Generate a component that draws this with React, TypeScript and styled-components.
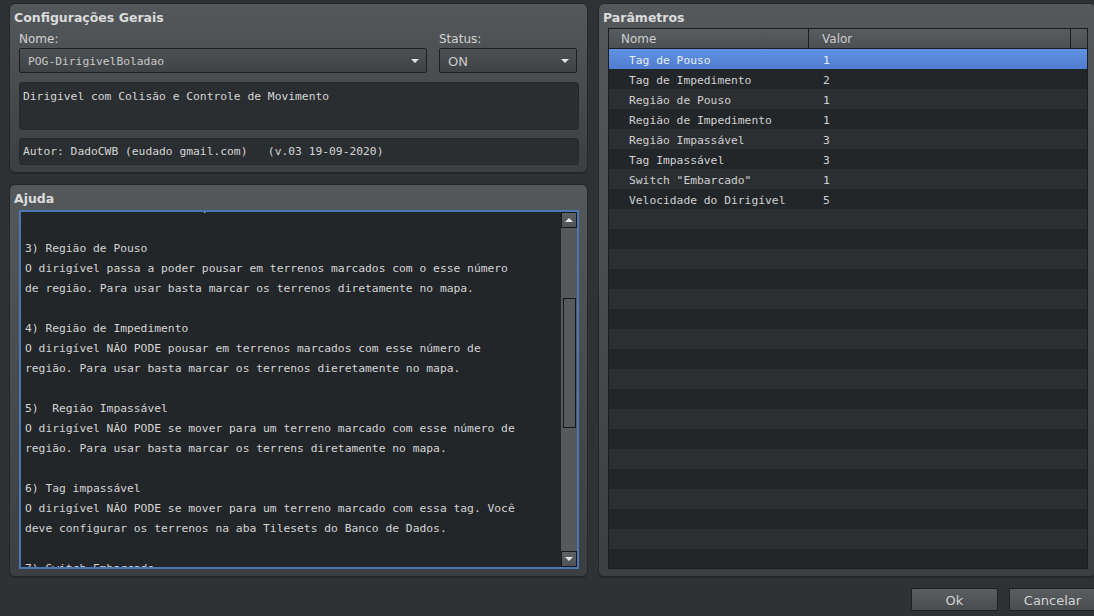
import { useLayoutEffect, useRef } from "react";
import styled, { createGlobalStyle } from "styled-components";

const GlobalStyle = createGlobalStyle`
  html, body {
    margin: 0;
    padding: 0;
    background: #2f3235;
    overflow: hidden;
  }
  * {
    box-sizing: border-box;
  }
`;

const SANS = `"DejaVu Sans", "Liberation Sans", sans-serif`;
const MONO = `"DejaVu Sans Mono", "Liberation Mono", monospace`;

const Window = styled.div`
  width: 1105px;
  height: 616px;
  padding: 3px 9px 0 9px;
  display: flex;
  flex-direction: column;
  background: #2f3235;
  font-family: ${SANS};
  color: #d0d0d0;
`;

const Main = styled.div`
  display: grid;
  grid-template-columns: 579px 498px;
  column-gap: 10px;
  height: 574px;
`;

const LeftColumn = styled.div`
  display: grid;
  grid-template-rows: 170px 1fr;
  row-gap: 11px;
  min-height: 0;
`;

const GroupBox = styled.section`
  display: flex;
  flex-direction: column;
  min-height: 0;
  border: 1px solid #24272a;
  border-radius: 6px;
  background: linear-gradient(#55585b, #3c3f42);
  padding: 3px 8px 7px 9px;
  box-shadow: 0 1px 0 rgba(0, 0, 0, 0.25);
`;

const GroupTitle = styled.h2`
  margin: 0 0 0 -5px;
  height: 18px;
  line-height: 21px;
  font-size: 12.5px;
  font-weight: bold;
  color: #dcdcdc;
`;

const FieldGrid = styled.div`
  display: grid;
  grid-template-columns: 408px 138px;
  column-gap: 12px;
  margin-top: 5px;
`;

const Field = styled.div`
  display: flex;
  flex-direction: column;
`;

const Label = styled.label`
  height: 16px;
  line-height: 18px;
  font-size: 12px;
  color: #d2d2d2;
`;

const Combo = styled.div<{ $mono?: boolean }>`
  margin-top: 2px;
  height: 25px;
  display: flex;
  align-items: center;
  justify-content: space-between;
  padding: 1px 7px 0 8px;
  border: 1px solid #1d1f21;
  border-radius: 2px;
  background: linear-gradient(#4d5053, #404346);
  font-family: ${(p) => (p.$mono ? MONO : SANS)};
  font-size: ${(p) => (p.$mono ? "11.3px" : "13px")};
  color: #c8c8c8;
`;

const Arrow = styled.span<{ $up?: boolean }>`
  width: 0;
  height: 0;
  border-left: 4px solid transparent;
  border-right: 4px solid transparent;
  ${(p) =>
    p.$up
      ? "border-bottom: 4px solid #e6e6e6;"
      : "border-top: 4px solid #e6e6e6;"}
`;

const TextBox = styled.div<{ $height: number; $gap: number; $center?: boolean }>`
  margin-top: ${(p) => p.$gap}px;
  height: ${(p) => p.$height}px;
  padding: ${(p) => (p.$center ? "1px 3px 0" : "4px 3px")};
  display: flex;
  align-items: ${(p) => (p.$center ? "center" : "flex-start")};
  border: 1px solid #26292b;
  border-radius: 3px;
  background: #2b2e31;
  font-family: ${MONO};
  font-size: 11.3px;
  line-height: 20px;
  color: #d4d4d4;
  white-space: pre;
`;

const HelpArea = styled.div`
  flex: 1;
  min-height: 0;
  margin-top: 4px;
  display: flex;
  border: 2px solid #4a77b3;
  background: #232629;
  overflow: hidden;
`;

const HelpText = styled.div`
  flex: 1;
  min-width: 0;
  overflow: hidden;
  padding-left: 4px;
`;

const HelpLines = styled.pre`
  margin: 0;
  font-family: ${MONO};
  font-size: 11.3px;
  line-height: 20px;
  color: #d4d4d4;
`;

const ScrollBar = styled.div`
  width: 16px;
  flex-shrink: 0;
  display: flex;
  flex-direction: column;
  background: #56595c;
`;

const ScrollButton = styled.div`
  height: 16px;
  display: flex;
  align-items: center;
  justify-content: center;
  border: 1px solid #17191b;
  background: linear-gradient(#5e6164, #505356);
`;

const ScrollTrack = styled.div`
  flex: 1;
  padding: 70px 1px 0 2px;
`;

const ScrollThumb = styled.div`
  height: 130px;
  border: 1px solid #15171a;
  background: #575a5d;
`;

const Table = styled.div`
  flex: 1;
  min-height: 0;
  margin: 3px -1px 0 0;
  display: flex;
  flex-direction: column;
  border: 1px solid #1b1d1f;
  overflow: hidden;
`;

const HeaderRow = styled.div`
  display: grid;
  grid-template-columns: 200px 262px 1fr;
  height: 20px;
  flex-shrink: 0;
  border-bottom: 1px solid #1b1d1f;
  background: linear-gradient(#595c5f, #4d5053);
`;

const HeaderCell = styled.div<{ $pad: number }>`
  padding: 1px 0 0 ${(p) => p.$pad}px;
  line-height: 19px;
  font-size: 12px;
  color: #cdcdcd;
  border-right: 1px solid #1b1d1f;
  &:last-child {
    border-right: none;
  }
`;

const Row = styled.div<{ $selected?: boolean; $odd?: boolean }>`
  display: grid;
  grid-template-columns: 200px 1fr;
  height: 20px;
  flex-shrink: 0;
  font-family: ${MONO};
  font-size: 11.3px;
  line-height: 20px;
  color: ${(p) => (p.$selected ? "#e6edf8" : "#d0d0d0")};
  background: ${(p) =>
    p.$selected
      ? "linear-gradient(#6192e4, #4f7dcf)"
      : p.$odd
      ? "#232629"
      : "#2c2f32"};
`;

const Cell = styled.div<{ $pad: number }>`
  padding: 2px 0 0 ${(p) => p.$pad}px;
  white-space: pre;
`;

const Footer = styled.div`
  display: flex;
  justify-content: flex-end;
  gap: 11px;
  padding-top: 11px;
`;

const Button = styled.button`
  width: 87px;
  height: 23px;
  padding: 1px 0 0;
  border: 1px solid #1d1f21;
  border-radius: 2px;
  background: linear-gradient(#5b5e61, #4a4d50);
  font-family: ${SANS};
  font-size: 13px;
  color: #d2d2d2;
`;

const helpLines = [
  "Tilesets no Banco de Dados,",
  "",
  "3) Região de Pouso",
  "O dirigível passa a poder pousar em terrenos marcados com o esse número",
  "de região. Para usar basta marcar os terrenos diretamente no mapa.",
  "",
  "4) Região de Impedimento",
  "O dirigível NÃO PODE pousar em terrenos marcados com esse número de",
  "região. Para usar basta marcar os terrenos dieretamente no mapa.",
  "",
  "5)  Região Impassável",
  "O dirigível NÃO PODE se mover para um terreno marcado com esse número de",
  "região. Para usar basta marcar os terrens diretamente no mapa.",
  "",
  "6) Tag impassável",
  "O dirigível NÃO PODE se mover para um terreno marcado com essa tag. Você",
  "deve configurar os terrenos na aba Tilesets do Banco de Dados.",
  "",
  "7) Switch Embarcado",
  "Quando o switch estiver ligado o dirigível está embarcado.",
];

const params: [string, string][] = [
  ["Tag de Pouso", "1"],
  ["Tag de Impedimento", "2"],
  ["Região de Pouso", "1"],
  ["Região de Impedimento", "1"],
  ["Região Impassável", "3"],
  ["Tag Impassável", "3"],
  ['Switch "Embarcado"', "1"],
  ["Velocidade do Dirigível", "5"],
];

const TOTAL_ROWS = 26;

export default function App() {
  const helpRef = useRef<HTMLDivElement>(null);
  const rows = Array.from({ length: TOTAL_ROWS }, (_, i) => params[i] ?? ["", ""]);

  // the help text is shown scrolled a bit down, as in the dialog
  useLayoutEffect(() => {
    if (helpRef.current) helpRef.current.scrollTop = 13;
  }, []);

  return (
    <>
      <GlobalStyle />
      <Window>
        <Main>
          <LeftColumn>
            <GroupBox>
              <GroupTitle>Configurações Gerais</GroupTitle>
              <FieldGrid>
                <Field>
                  <Label>Nome:</Label>
                  <Combo $mono>
                    POG-DirigivelBoladao
                    <Arrow />
                  </Combo>
                </Field>
                <Field>
                  <Label>Status:</Label>
                  <Combo>
                    ON
                    <Arrow />
                  </Combo>
                </Field>
              </FieldGrid>
              <TextBox $height={48} $gap={9}>
                Dirigivel com Colisão e Controle de Movimento
              </TextBox>
              <TextBox $height={27} $gap={8} $center>
                Autor: DadoCWB (eudado gmail.com)   (v.03 19-09-2020)
              </TextBox>
            </GroupBox>

            <GroupBox>
              <GroupTitle>Ajuda</GroupTitle>
              <HelpArea>
                <HelpText ref={helpRef}>
                  <HelpLines>{helpLines.join("\n")}</HelpLines>
                </HelpText>
                <ScrollBar>
                  <ScrollButton>
                    <Arrow $up />
                  </ScrollButton>
                  <ScrollTrack>
                    <ScrollThumb />
                  </ScrollTrack>
                  <ScrollButton>
                    <Arrow />
                  </ScrollButton>
                </ScrollBar>
              </HelpArea>
            </GroupBox>
          </LeftColumn>

          <GroupBox>
            <GroupTitle>Parâmetros</GroupTitle>
            <Table>
              <HeaderRow>
                <HeaderCell $pad={12}>Nome</HeaderCell>
                <HeaderCell $pad={13}>Valor</HeaderCell>
                <HeaderCell $pad={0} />
              </HeaderRow>
              {rows.map(([name, value], i) => (
                <Row key={i} $selected={i === 0} $odd={i % 2 === 1}>
                  <Cell $pad={20}>{name}</Cell>
                  <Cell $pad={14}>{value}</Cell>
                </Row>
              ))}
            </Table>
          </GroupBox>
        </Main>

        <Footer>
          <Button>Ok</Button>
          <Button>Cancelar</Button>
        </Footer>
      </Window>
    </>
  );
}
